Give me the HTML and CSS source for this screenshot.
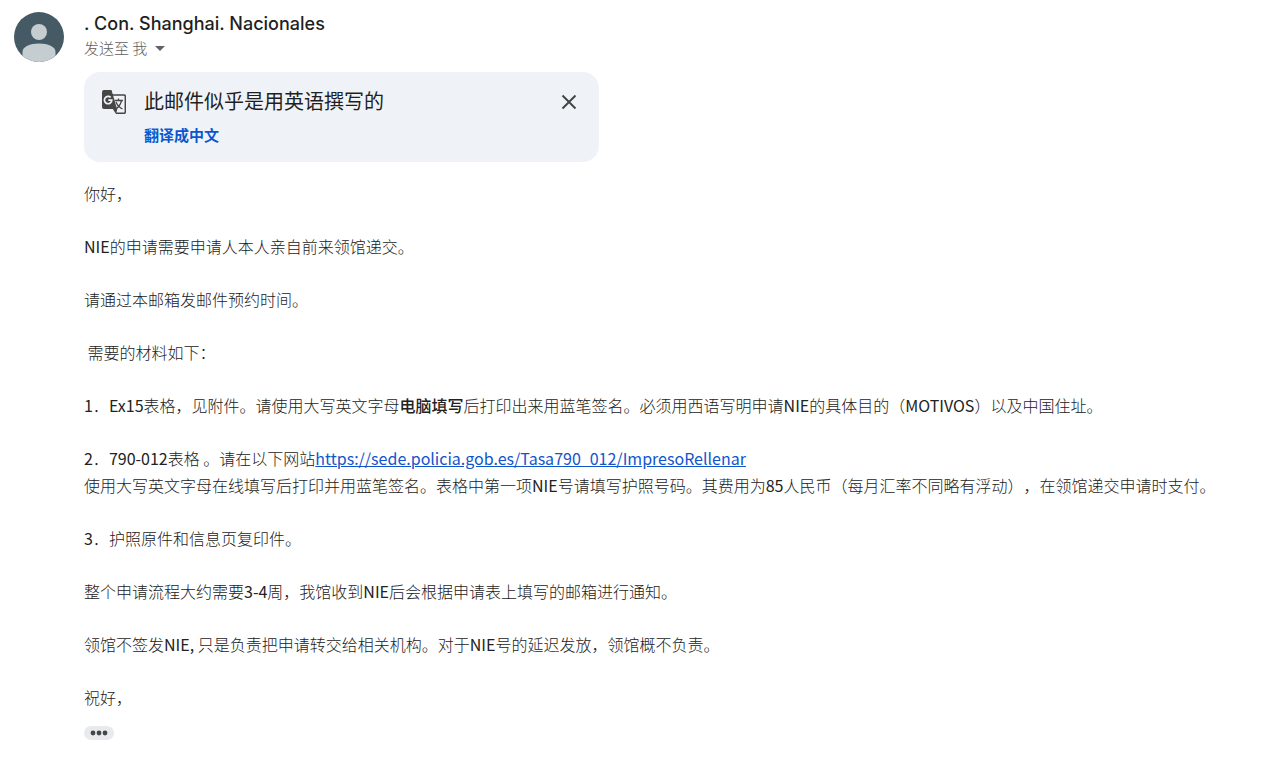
FILE: index.html
```html
<!DOCTYPE html>
<html lang="zh-CN">
<head>
<meta charset="utf-8">
<meta name="viewport" content="width=device-width, initial-scale=1">
<title>邮件</title>
<link rel="stylesheet" href="styles.css">
</head>
<body>
<article class="message">
  <svg class="avatar" viewBox="0 0 50 50" aria-hidden="true">
    <defs><clipPath id="disc"><circle cx="25" cy="25" r="25"/></clipPath></defs>
    <g clip-path="url(#disc)">
      <rect width="50" height="50" fill="#455a64"/>
      <circle cx="25" cy="20" r="8" fill="#c5cdd1"/>
      <path d="M8.500 50V40c0-5.500 7.500-8.500 16.500-8.500S41.500 34.500 41.500 40v10z" fill="#c5cdd1"/>
    </g>
  </svg>
  <div class="content">
    <header class="head">
      <h1 class="sender">. Con. Shanghai. Nacionales</h1>
      <button class="recipient" type="button">发送至 我
        <svg class="caret" viewBox="0 0 10 5" aria-hidden="true"><path d="M0 0h10L5 5z" fill="#5f6368"/></svg>
      </button>
    </header>
    <section class="translate">
      <svg class="translate-icon" viewBox="0 0 24 24" aria-hidden="true">
        <path d="M10 5h12q1.300 0 1.300 1.300v15.700q0 1.300-1.300 1.300H14" fill="none" stroke="#444746" stroke-width="1.500"/>
        <path d="M2 0h7.500l5.500 19H2q-2 0-2-2V2q0-2 2-2z" fill="#444746"/>
        <path d="M10.500 18.500H15.500L14 24z" fill="#444746"/>
        <path d="M8.700 7.400A3.700 3.700 0 1 0 9.800 10.200H6.300" fill="none" stroke="#f0f3f8" stroke-width="1.700"/>
        <path d="M12.500 10.500h8.500M16.500 8.500v2M19.500 10.500q-1 5-5 8M14 12q2 5 6.500 7" fill="none" stroke="#444746" stroke-width="1.300"/>
      </svg>
      <div class="translate-text">
        <h2 class="translate-title">此邮件似乎是用英语撰写的</h2>
        <button class="translate-action" type="button">翻译成中文</button>
      </div>
      <button class="close" type="button" aria-label="关闭">
        <svg class="close-icon" viewBox="0 0 16 16" aria-hidden="true"><path d="M1.500 1.500l13 13M14.500 1.500l-13 13" stroke="#444746" stroke-width="2"/></svg>
      </button>
    </section>
    <div class="body">
      <p>你好，</p>
      <p><span class="latin">NIE</span>的申请需要申请人本人亲自前来领馆递交。</p>
      <p>请通过本邮箱发邮件预约时间。</p>
      <p>&nbsp;需要的材料如下：</p>
      <p><span class="latin">1</span>．<span class="latin">Ex15</span>表格，见附件。请使用大写英文字母<strong>电脑填写</strong>后打印出来用蓝笔签名。必须用西语写明申请<span class="latin">NIE</span>的具体目的（<span class="latin">MOTIVOS</span>）以及中国住址。</p>
      <p><span class="latin">2</span>．<span class="latin">790-012</span>表格 。请在以下网站<a href="https://sede.policia.gob.es/Tasa790_012/ImpresoRellenar">https://sede.policia.gob.es/Tasa790_012/ImpresoRellenar</a><br>使用大写英文字母在线填写后打印并用蓝笔签名。表格中第一项<span class="latin">NIE</span>号请填写护照号码。其费用为<span class="latin">85</span>人民币（每月汇率不同略有浮动），在领馆递交申请时支付。</p>
      <p><span class="latin">3</span>．护照原件和信息页复印件。</p>
      <p>整个申请流程大约需要<span class="latin">3-4</span>周，我馆收到<span class="latin">NIE</span>后会根据申请表上填写的邮箱进行通知。</p>
      <p>领馆不签发<span class="latin">NIE, </span>只是负责把申请转交给相关机构。对于<span class="latin">NIE</span>号的延迟发放，领馆概不负责。</p>
      <p>祝好，</p>
    </div>
    <button class="more" type="button" aria-label="显示删减的内容">
      <svg class="dots" viewBox="0 0 18 6" aria-hidden="true"><g fill="#444746"><circle cx="3" cy="3" r="2.400"/><circle cx="9" cy="3" r="2.400"/><circle cx="15" cy="3" r="2.400"/></g></svg>
    </button>
  </div>
</article>
</body>
</html>
```
FILE: styles.css
```css
* { box-sizing: border-box; }
body {
  margin: 0;
  background: #fff;
  color: #222;
  font-family: "Noto Sans CJK SC", sans-serif;
}
button {
  padding: 0;
  border: 0;
  background: none;
  font-family: inherit;
  cursor: pointer;
}
h1, h2, p { margin: 0; }
.message {
  display: flex;
  gap: 20px;
  padding: 12px 14px;
}
.avatar { flex: none; width: 50px; height: 50px; }
.content { flex: 1; min-width: 0; }
.head {
  display: flex;
  flex-direction: column;
  align-items: flex-start;
}
.sender {
  color: #1f1f1f;
  font: 500 18px/24px Inter, sans-serif;
}
.recipient {
  display: flex;
  align-items: center;
  gap: 8px;
  color: #5e5e5e;
  font-size: 15px;
  font-weight: 300;
  line-height: 24px;
}
.caret { width: 10px; height: 5px; }
.translate {
  display: flex;
  align-items: flex-start;
  gap: 18px;
  max-width: 515px;
  margin-top: 12px;
  padding: 15px 20px 15px 18px;
  border-radius: 16px;
  background: #eff3f8;
}
.translate-icon { flex: none; width: 24px; height: 24px; margin-top: 3px; }
.translate-text { flex: 1; }
.translate-title {
  color: #1f1f1f;
  font-size: 20px;
  font-weight: 400;
  line-height: 28px;
}
.translate-action {
  display: block;
  margin-top: 8px;
  color: #0b57d0;
  font-size: 15px;
  font-weight: 700;
  line-height: 24px;
}
.close { display: flex; padding: 7px 2px; }
.close-icon { width: 16px; height: 16px; }
.body {
  display: flex;
  flex-direction: column;
  gap: 26px;
  margin-top: 18px;
  font-size: 16px;
  font-weight: 300;
  line-height: 27px;
  text-spacing-trim: space-all;
}
.body strong { font-weight: 500; }
.latin { font-weight: 400; }
.body a { color: #1155cc; font-weight: 400; }
.more {
  display: flex;
  align-items: center;
  justify-content: center;
  width: 30px;
  height: 14px;
  margin-top: 15px;
  border-radius: 7px;
  background: #e8eaed;
}
.dots { width: 18px; height: 6px; }
```
